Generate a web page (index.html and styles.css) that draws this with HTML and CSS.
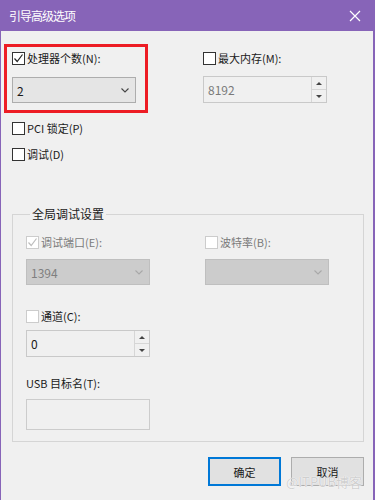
FILE: index.html
```html
<!DOCTYPE html>
<html lang="zh-CN">
<head>
<meta charset="UTF-8">
<meta name="viewport" content="width=device-width, initial-scale=1.0">
<title>引导高级选项</title>
<link rel="stylesheet" href="styles.css">
</head>
<body>
<div class="dialog">
    <div class="titlebar">
        <span class="title">引导高级选项</span>
        <svg class="close" width="12" height="12" viewBox="0 0 12 12"><path d="M1 1L11 11M11 1L1 11" stroke="#fff" stroke-width="1.2"/></svg>
    </div>
    <div class="content">
        <div class="row">
            <div class="field">
                <label class="check"><span class="box"><svg width="11" height="11" viewBox="0 0 11 11"><path d="M1.5 5.5L4.2 8.5L9.5 1.5" fill="none" stroke="#222" stroke-width="1.2"/></svg></span>处理器个数(N):</label>
                <div class="select"><span>2</span><svg class="arrow" width="8" height="5" viewBox="0 0 8 5"><path d="M0.5 0.5L4 4L7.5 0.5" fill="none" stroke="#444" stroke-width="1.1"/></svg></div>
            </div>
            <div class="field">
                <label class="check"><span class="box"></span>最大内存(M):</label>
                <div class="spin muted"><span>8192</span>
                    <div class="spin-btns"><span class="up"></span><span class="down"></span></div>
                </div>
            </div>
        </div>
        <label class="check pci"><span class="box"></span>PCI 锁定(P)</label>
        <label class="check debug"><span class="box"></span>调试(D)</label>

        <fieldset class="group">
            <legend>全局调试设置</legend>
            <div class="row">
                <div class="field">
                    <label class="check off"><span class="box"><svg width="11" height="11" viewBox="0 0 11 11"><path d="M1.5 5.5L4.2 8.5L9.5 1.5" fill="none" stroke="#bdbdbd" stroke-width="1.2"/></svg></span>调试端口(E):</label>
                    <div class="select disabled"><span>1394</span><svg class="arrow" width="8" height="5" viewBox="0 0 8 5"><path d="M0.5 0.5L4 4L7.5 0.5" fill="none" stroke="#a8a8a8" stroke-width="1.1"/></svg></div>
                </div>
                <div class="field">
                    <label class="check off"><span class="box"></span>波特率(B):</label>
                    <div class="select disabled"><span></span><svg class="arrow" width="8" height="5" viewBox="0 0 8 5"><path d="M0.5 0.5L4 4L7.5 0.5" fill="none" stroke="#a8a8a8" stroke-width="1.1"/></svg></div>
                </div>
            </div>
            <div class="field channel">
                <label class="check light"><span class="box"></span>通道(C):</label>
                <div class="spin"><span>0</span>
                    <div class="spin-btns"><span class="up"></span><span class="down"></span></div>
                </div>
            </div>
            <div class="field usb">
                <div class="label">USB 目标名(T):</div>
                <div class="textbox"></div>
            </div>
        </fieldset>

        <div class="buttons">
            <button class="btn default">确定</button>
            <button class="btn">取消</button>
        </div>
    </div>
    <div class="mark"></div>
    <div class="watermark">@ITPUB博客</div>
</div>
</body>
</html>
```
FILE: styles.css
```css
body {
    margin: 0;
    font-family: "Noto Sans CJK SC", "Noto Sans", sans-serif;
    font-size: 11px;
    color: #1a1a1a;
}
.dialog {
    position: relative;
    width: 375px;
    height: 500px;
    box-sizing: border-box;
    background-color: #f0f0f0;
    border-left: 1px solid #8764b8;
    border-right: 2px solid #8764b8;
    overflow: hidden;
}
.titlebar {
    height: 31px;
    background-color: #8764b8;
    display: flex;
    align-items: center;
    justify-content: space-between;
    padding: 0 12px 0 8px;
    color: white;
}
.title {
    font-size: 12px;
    letter-spacing: -1px;
}
.content {
    padding: 21px 9px 0 11px;
}
.row {
    display: grid;
    grid-template-columns: 191px 1fr;
}
.check {
    display: flex;
    align-items: center;
    height: 13px;
    line-height: 13px;
    white-space: nowrap;
}
.check .box {
    width: 11px;
    height: 11px;
    border: 1px solid #333;
    background-color: white;
    margin-right: 2px;
    display: flex;
}
.check.off {
    color: #7a7a7a;
}
.check.off .box,
.check.light .box {
    border-color: #cccccc;
}
.select, .spin, .textbox {
    box-sizing: border-box;
    width: 124px;
    border: 1px solid #adadad;
    display: flex;
    align-items: center;
}
.select {
    height: 26px;
    margin-top: 12px;
    background-color: #e5e5e5;
    justify-content: space-between;
    padding: 0 6px 0 4px;
    font-size: 12px;
}
.select.disabled {
    background-color: #cccccc;
    border-color: #bfbfbf;
    color: #7f7f7f;
    margin-top: 10px;
}
.spin {
    height: 27px;
    margin-top: 11px;
    border-color: #c9c9c9;
    justify-content: space-between;
    padding-left: 4px;
    font-size: 12px;
}
.spin.muted {
    color: #7a7a7a;
}
.spin-btns {
    display: flex;
    flex-direction: column;
    width: 14px;
    height: 25px;
    border-left: 1px solid #d6d6d6;
}
.spin-btns span {
    flex: 1;
    display: flex;
    align-items: center;
    justify-content: center;
}
.spin-btns .up {
    border-bottom: 1px solid #d6d6d6;
}
.spin-btns .up::after {
    content: "";
    border: 3px solid transparent;
    border-bottom: 3px solid #444;
    border-top: 0;
}
.spin-btns .down::after {
    content: "";
    border: 3px solid transparent;
    border-top: 3px solid #444;
    border-bottom: 0;
}
.pci {
    margin-top: 19px;
}
.debug {
    margin-top: 13px;
}
.group {
    margin: 46px 0 0 0;
    padding: 15px 0 11px 13px;
    border: 1px solid #d5d5d5;
    min-width: 0;
}
.group legend {
    margin-left: 4px;
    padding: 0 2px;
    line-height: 14px;
    height: 14px;
    font-size: 12px;
}
.group .row {
    grid-template-columns: 179px 1fr;
}
.channel {
    margin-top: 25px;
}
.channel .spin {
    margin-top: 7px;
}
.usb .label {
    margin-top: 20px;
    height: 13px;
    line-height: 13px;
}
.textbox {
    height: 31px;
    margin-top: 9px;
    border-color: #cccccc;
}
.buttons {
    display: flex;
    justify-content: flex-end;
    gap: 10px;
    margin-top: 15px;
}
.btn {
    width: 73px;
    height: 29px;
    background-color: #e1e1e1;
    border: 1px solid #adadad;
    font-family: inherit;
    font-size: 11px;
    color: #1a1a1a;
    padding: 0;
}
.btn.default {
    border: 2px solid #0078d7;
}
.mark {
    position: absolute;
    left: 3px;
    top: 44px;
    width: 138px;
    height: 63px;
    border: 3px solid #ed1c24;
}
.watermark {
    position: absolute;
    left: 285px;
    top: 472px;
    font-size: 13px;
    white-space: nowrap;
    color: #cfcfcf;
    text-shadow: 0 0 1px white, 0 0 1px white;
}
```
